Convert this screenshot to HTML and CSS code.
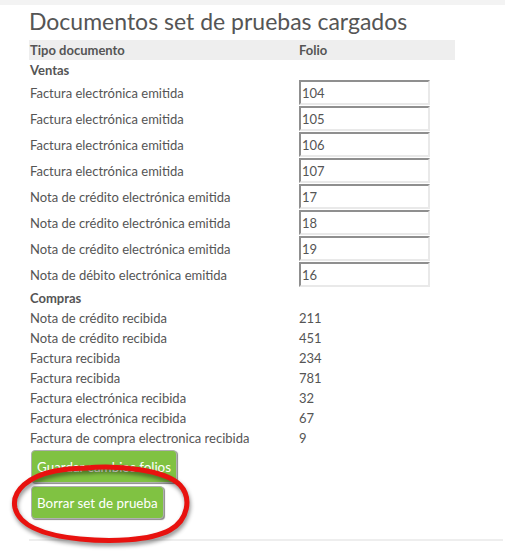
FILE: index.html
```html
<!DOCTYPE html>
<html lang="es">
<head>
<meta charset="utf-8">
<title>Documentos set de pruebas cargados</title>
<link rel="stylesheet" href="styles.css">
</head>
<body>
<div class="topbar"></div>
<main class="page">
  <h1 class="title">Documentos set de pruebas cargados</h1>
  <table class="docs">
    <thead>
      <tr class="head"><th class="c1">Tipo documento</th><th class="c2">Folio</th></tr>
    </thead>
    <tbody>
      <tr class="group"><td colspan="2">Ventas</td></tr>
      <tr class="edit"><td>Factura electrónica emitida</td><td><input class="folio" value="104"></td></tr>
      <tr class="edit"><td>Factura electrónica emitida</td><td><input class="folio" value="105"></td></tr>
      <tr class="edit"><td>Factura electrónica emitida</td><td><input class="folio" value="106"></td></tr>
      <tr class="edit"><td>Factura electrónica emitida</td><td><input class="folio" value="107"></td></tr>
      <tr class="edit"><td>Nota de crédito electrónica emitida</td><td><input class="folio" value="17"></td></tr>
      <tr class="edit"><td>Nota de crédito electrónica emitida</td><td><input class="folio" value="18"></td></tr>
      <tr class="edit"><td>Nota de crédito electrónica emitida</td><td><input class="folio" value="19"></td></tr>
      <tr class="edit"><td>Nota de débito electrónica emitida</td><td><input class="folio" value="16"></td></tr>
      <tr class="group"><td colspan="2">Compras</td></tr>
      <tr class="plain"><td>Nota de crédito recibida</td><td>211</td></tr>
      <tr class="plain"><td>Nota de crédito recibida</td><td>451</td></tr>
      <tr class="plain"><td>Factura recibida</td><td>234</td></tr>
      <tr class="plain"><td>Factura recibida</td><td>781</td></tr>
      <tr class="plain"><td>Factura electrónica recibida</td><td>32</td></tr>
      <tr class="plain"><td>Factura electrónica recibida</td><td>67</td></tr>
      <tr class="plain"><td>Factura de compra electronica recibida</td><td>9</td></tr>
    </tbody>
  </table>
  <div class="actions">
    <button class="btn">Guardar cambios folios</button>
    <button class="btn">Borrar set de prueba</button>
  </div>
  <hr class="rule">
</main>
<svg class="annotation" width="506" height="560" viewBox="0 0 506 560" aria-hidden="true">
  <path d="M85,468 C120,465 165,470 180,485 C192,498 188,520 170,530 C150,541 110,542 80,539 C50,536 20,528 15,508 C11,490 30,476 55,471 C65,469 75,468 90,468" fill="none" stroke="#e8120f" stroke-width="5" stroke-linecap="round"/>
</svg>
</body>
</html>
```
FILE: styles.css
```css
* { box-sizing: border-box; }
html, body { margin: 0; padding: 0; background: #fff; }
body {
  font-family: "Lato", "Liberation Sans", sans-serif;
  color: #555;
  width: 506px;
  height: 560px;
  overflow: hidden;
  position: relative;
}
.topbar {
  height: 5px;
  width: 505px;
  background: #f3f3f3;
}
.page {
  padding: 0 3px 0 29px;
}
.title {
  margin: 0;
  padding-top: 2px;
  height: 35px;
  font-size: 23px;
  line-height: 28px;
  font-weight: 400;
  color: #555;
}
.docs {
  border-collapse: collapse;
  width: 426px;
  font-size: 13px;
}
.docs td, .docs th {
  padding: 0 0 0 1px;
  text-align: left;
  vertical-align: middle;
}
.docs td + td, .docs th + th { padding-left: 0; }
.head { background: #eee; height: 20px; }
.head th { font-weight: 700; }
.c1 { width: 270px; }
.group td { font-weight: 700; height: 20px; }
.edit td { height: 26px; padding-bottom: 1px; }
.plain td { height: 20px; }
.folio {
  display: block;
  width: 131px;
  height: 25px;
  margin: 0;
  padding: 0 0 0 1px;
  font: 13px "Lato", "Liberation Sans", sans-serif;
  color: #555;
  background: #fff;
  border-style: solid;
  border-width: 2px;
  border-color: #8f8f8f #e9e9e9 #e9e9e9 #8f8f8f;
  border-radius: 0;
}
.actions {
  display: flex;
  flex-direction: column;
  align-items: flex-start;
  gap: 3px;
  padding: 2px 0 0 2px;
}
.btn {
  height: 33px;
  padding: 0 5px;
  background: #80c242;
  color: #fff;
  font: 13.4px "Lato", "Liberation Sans", sans-serif;
  border: 1px solid #b0b0b0;
  border-radius: 4px;
  box-shadow: 1px 1px 1px #8a8a8a;
}
.rule {
  margin: 20px 0 0 0;
  border: 0;
  border-top: 2px solid #eee;
  width: 474px;
}
.annotation {
  position: absolute;
  left: 0;
  top: 0;
  pointer-events: none;
  filter: drop-shadow(1px 3px 2px rgba(0,0,0,0.45));
}
```
